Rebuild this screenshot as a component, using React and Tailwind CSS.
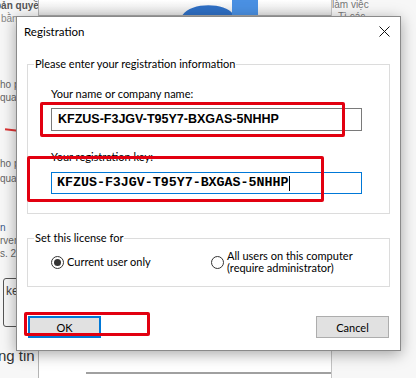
export default function App() {
  return (
    <div className="relative w-[416px] h-[378px] overflow-hidden bg-white font-['Lato',sans-serif] text-black">
      {/* background page */}
      <div className="flex h-full">
        <div className="w-[38px] bg-[#f7f7f7] font-['Liberation_Sans',sans-serif] text-[10px] leading-[13px] text-[#666] overflow-hidden whitespace-nowrap">
          <div className="-ml-[5px] mt-[-1px] font-bold text-[#555]">bản quyền</div>
          <div className="ml-[1px] text-[#888]">bằng…</div>
          <div className="mt-[53px]">ho p</div>
          <div>qua</div>
          <div className="mt-[25px] ml-[5px] w-[13px] h-[2px] bg-[#d33] rotate-[6deg]"></div>
          <div className="mt-[26px]">ho p</div>
          <div className="mt-[2px]">qua</div>
          <div className="mt-[36px] text-[#3a5a8a]">n</div>
          <div>rver</div>
          <div>s. 2.</div>
          <div className="mt-[18px] ml-[3px] h-[49px] border border-[#555] rounded-[3px] pl-[2px] pt-[6px] text-[12px] text-[#444]">ke</div>
          <div className="mt-[19px] -ml-[2px] text-[15px] leading-[20px] text-[#333]">ng tin</div>
        </div>
        <div className="w-px bg-[#b4b4b4]"></div>
        <div className="flex-1 flex flex-col">
          <div className="relative h-[16px] bg-gradient-to-b from-white to-[#e4e4e4] border-b border-[#a8a8a8] overflow-hidden">
            <svg className="absolute left-[142px] top-0" width="80" height="16" viewBox="0 0 80 16">
              <path d="M1 16 C 8 2, 44 2, 52 14 L52 16 Z" fill="#2f6fc4" />
              <rect x="51" y="0" width="26" height="16" fill="#4a90e2" />
            </svg>
          </div>
          <div className="flex-1 flex flex-col justify-end pb-[4px]">
            <div className="ml-[47px] w-[245px] h-[2px] bg-[#a0a0a0]"></div>
          </div>
        </div>
        <div className="w-px bg-[#c4c4c4]"></div>
        <div className="flex-1 bg-[#f7f7f7] font-['Liberation_Sans',sans-serif] text-[10px] leading-[12px] text-[#777] whitespace-nowrap overflow-hidden">
          <div className="mt-[-1px]">làm việc</div>
          <div className="ml-[6px]">Tì các</div>
          <div className="ml-[24px]">n xa</div>
        </div>
      </div>

      {/* dialog */}
      <div className="absolute left-[16px] top-[16px] w-[385px] h-[335px] bg-white border border-[#8a8a8a] shadow-[0_3px_14px_rgba(0,0,0,0.35)] flex flex-col">
        <div className="h-[29px] flex items-center justify-between pl-[7px] pr-[10px]">
          <span className="text-[11.5px]">Registration</span>
          <svg width="11" height="11" viewBox="0 0 11 11">
            <path d="M0.5 0.5 L10.5 10.5 M10.5 0.5 L0.5 10.5" stroke="#111" strokeWidth="1" />
          </svg>
        </div>
        <div className="px-[10px] flex flex-col">
          <fieldset className="mt-[10px] border border-[#dcdcdc]">
            <legend className="ml-[6px] px-[1px] text-[11px] leading-[16px]">Please enter your registration information</legend>
            <div className="pl-[23px] pr-[27px] pt-[14px] pb-[19px] flex flex-col">
              <div className="text-[11px] leading-[16px]">Your name or company name:</div>
              <div className="mt-[6px] h-[23px] border border-[#7a7a7a] flex items-center pl-[6px] font-['Liberation_Sans',sans-serif] font-bold text-[12.5px]">KFZUS-F3JGV-T95Y7-BXGAS-5NHHP</div>
              <div className="mt-[18px] text-[11px] leading-[16px]">Your registration key:</div>
              <div className="mt-[7px] h-[22px] border border-[#0078d7] flex items-center pl-[5px] font-['Liberation_Mono',monospace] font-bold text-[13.3px]">
                <span>KFZUS-F3JGV-T95Y7-BXGAS-5NHHP</span>
                <span className="ml-[1px] w-px h-[15px] bg-black"></span>
              </div>
            </div>
          </fieldset>
          <fieldset className="mt-[16px] border border-[#dcdcdc]">
            <legend className="ml-[6px] px-[1px] text-[11px] leading-[16px]">Set this license for</legend>
            <div className="pl-[23px] pt-[4px] pb-[12px] flex items-center">
              <div className="flex items-center w-[160px]">
                <span className="w-[13px] h-[13px] rounded-full border border-[#333] flex items-center justify-center">
                  <span className="w-[7px] h-[7px] rounded-full bg-[#333]"></span>
                </span>
                <span className="ml-[3px] text-[11px] leading-[16px]">Current user only</span>
              </div>
              <div className="flex items-center">
                <span className="w-[13px] h-[13px] rounded-full border border-[#333] bg-white"></span>
                <span className="ml-[3px] text-[11px] leading-[12px]">All users on this computer<br />(require administrator)</span>
              </div>
            </div>
          </fieldset>
          <div className="mt-[29px] flex justify-between pl-[1px] pr-[1px]">
            <button className="w-[73px] h-[22px] bg-[#e1e1e1] border-2 border-[#0078d7] text-[11px] leading-none">OK</button>
            <button className="w-[73px] h-[22px] bg-[#e1e1e1] border border-[#adadad] text-[11px] leading-none">Cancel</button>
          </div>
        </div>
      </div>

      {/* red annotation boxes */}
      <div className="absolute left-[40px] top-[102px] w-[305px] h-[35px] border-[3px] border-[#e20010] rounded-[2px]"></div>
      <div className="absolute left-[27px] top-[156px] w-[297px] h-[46px] border-[3px] border-[#e20010] rounded-[2px]"></div>
      <div className="absolute left-[24px] top-[312px] w-[126px] h-[24px] border-[3px] border-[#e20010] rounded-[2px]"></div>
    </div>
  );
}
